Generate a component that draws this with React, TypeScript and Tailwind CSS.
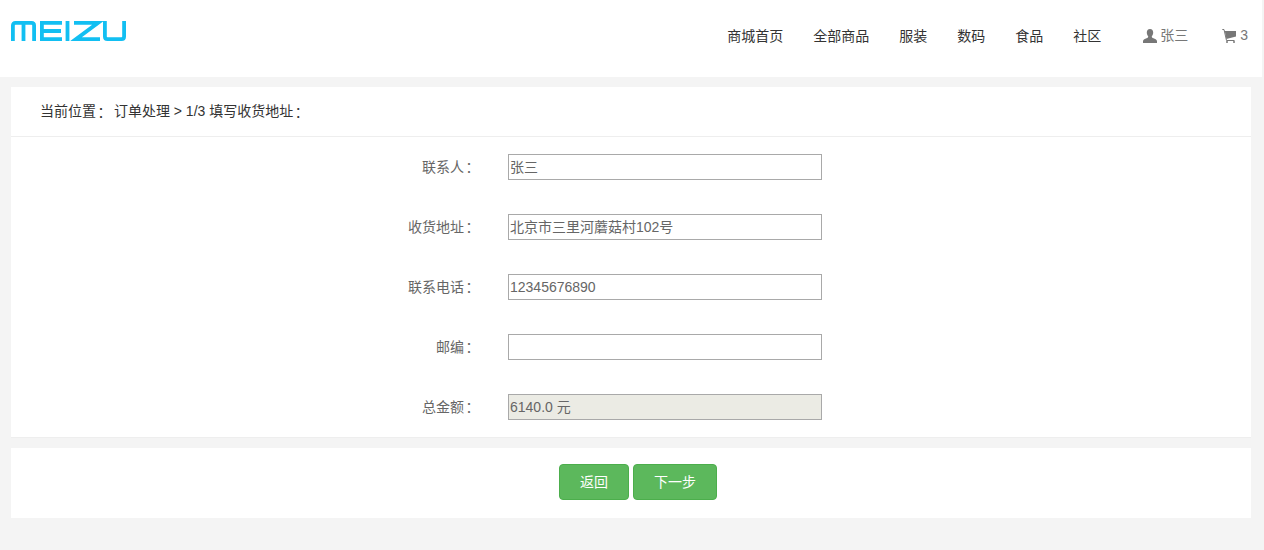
import React from 'react';

const navItems = ['商城首页', '全部商品', '服装', '数码', '食品', '社区'];

// the colon sits centred in its cell in the reference, the JP face draws it that way
const Colon = () => <span className="inline-block -ml-[2px] mr-[2px] translate-y-px font-['Noto_Sans_CJK_JP']">：</span>;

const FormRow: React.FC<{ label: string; value: string; disabled?: boolean; latin?: boolean }> = ({ label, value, disabled, latin }) => (
  <div className="flex items-center h-[26px]">
    <label className="w-[467px] text-right text-[14px] text-[#666]">{label}<Colon /></label>
    <input
      readOnly
      value={value}
      className={`ml-[30px] w-[314px] h-[26px] border border-[#a9a9a9] px-px text-[14px] text-[#666] outline-none ${latin ? 'pb-px' : 'pb-[3px]'} ${disabled ? 'bg-[#ebebe4]' : 'bg-white'}`}
    />
  </div>
);

const Logo = () => (
  <svg width="116" height="20" viewBox="0 0 116 20" fill="none" stroke="#12bff2" strokeWidth="3.800">
    <path d="M1.900 20V4.500Q1.900 1.900 4.500 1.900H20.500Q23.100 1.900 23.100 4.500V20M12.500 1.900V20" />
    <path d="M51 1.900H30.900V18.100H51M30.900 10H50" />
    <path d="M56.500 0V20" />
    <path d="M63 1.900H87L65 18.100H89" />
    <path d="M93.900 0V15.500Q93.900 18.100 96.500 18.100H110.500Q113.100 18.100 113.100 15.500V0" />
  </svg>
);

export default function App() {
  return (
    <div className="w-[1264px] min-h-[550px] bg-[#f4f4f4] font-['Liberation_Sans','Noto_Sans_CJK_SC',sans-serif] text-[14px] text-[#333]">
      <header className="w-[1262px] h-[77px] bg-white flex">
        <div className="ml-[11px] mt-[21px]">
          <Logo />
        </div>
        <nav className="ml-auto flex items-center h-[72px] gap-[30px]">
          {navItems.map((item) => (
            <a key={item}>{item}</a>
          ))}
        </nav>
        <div className="ml-[42px] flex items-center h-[71px] text-[#777]">
          <svg width="14" height="14" viewBox="0 0 14 14" fill="#777" className="mr-[3px]">
            <path d="M7 0C4.800 0 3.800 1.600 3.800 3.500C3.800 5 4.300 6.300 5.200 7.200C5.200 8.300 4.800 8.800 3.500 9.300C2 9.900 .3 10.500 0 12V14H14V12C13.700 10.500 12 9.900 10.500 9.300C9.200 8.800 8.800 8.300 8.800 7.200C9.700 6.300 10.200 5 10.200 3.500C10.200 1.600 9.200 0 7 0Z" />
          </svg>
          <span>张三</span>
          <svg width="15" height="14" viewBox="0 0 15 14" className="ml-[34px] mr-[3px]">
            <path d="M.3 .5H2L4.500 11.500H12.500" fill="none" stroke="#777" strokeWidth="1" />
            <path d="M2.800 2H14V7.500L4.400 10Z" fill="#777" />
            <circle cx="5" cy="13" r="1" fill="#777" />
            <circle cx="12" cy="13" r="1" fill="#777" />
          </svg>
          <span className="mr-[14px]">3</span>
        </div>
      </header>

      <main className="w-[1262px] px-[11px] pt-[10px]">
        <section className="bg-white border-b border-[#eeeeee]">
          <div className="h-[50px] border-b border-[#eeeeee] pl-[29px] flex items-center text-[#333] whitespace-pre">
            当前位置<Colon /> 订单处理 &gt; 1/3 填写收货地址<Colon />
          </div>
          <div className="flex flex-col gap-[34px] pt-[17px] pb-[17px]">
            <FormRow label="联系人" value="张三" />
            <FormRow label="收货地址" value="北京市三里河蘑菇村102号" />
            <FormRow label="联系电话" value="12345676890" latin />
            <FormRow label="邮编" value="" />
            <FormRow label="总金额" value="6140.0 元" disabled />
          </div>
        </section>

        <section className="mt-[10px] h-[70px] pl-[14px] pt-[16px] bg-white flex justify-center items-start gap-[4px]">
          <button className="w-[70px] h-[36px] rounded-[4px] border border-[#4cae4c] bg-[#5cb85c] text-white">返回</button>
          <button className="w-[84px] h-[36px] rounded-[4px] border border-[#4cae4c] bg-[#5cb85c] text-white">下一步</button>
        </section>
      </main>
    </div>
  );
}
